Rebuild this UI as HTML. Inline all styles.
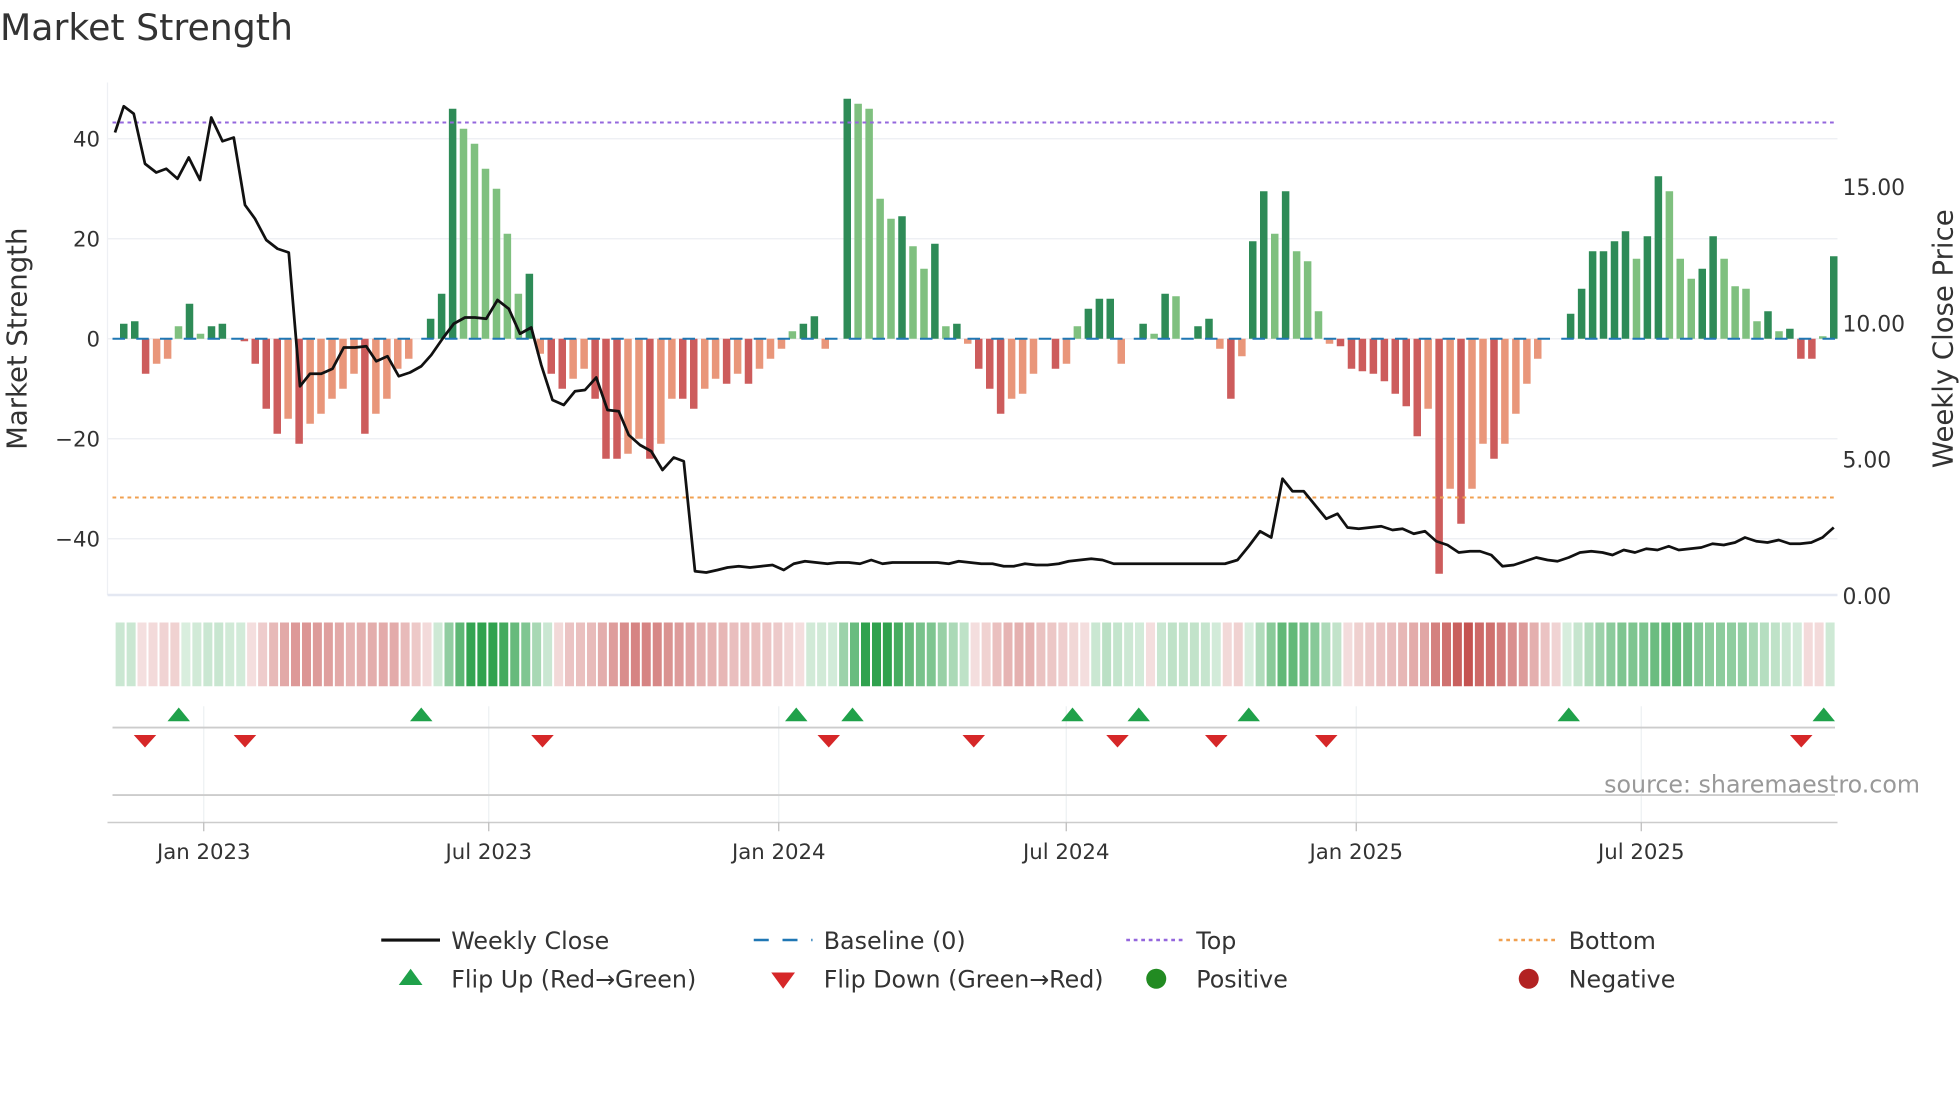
<!DOCTYPE html>
<html><head><meta charset="utf-8">
<style>
html,body{margin:0;padding:0;background:#fff;width:1960px;height:1102px;overflow:hidden}
svg{display:block}
text{font-family:"DejaVu Sans","Liberation Sans",sans-serif;fill:#333}
</style></head>
<body>
<svg id="s" width="1960" height="1102" viewBox="0 0 1568 881.6" xmlns="http://www.w3.org/2000/svg">
<text x="0" y="32" font-size="29" fill="#333">Market Strength</text>
<g stroke="#eceef2" stroke-width="1">
<line x1="86" x2="1470" y1="111" y2="111"/><line x1="86" x2="1470" y1="191" y2="191"/>
<line x1="86" x2="1470" y1="351" y2="351"/><line x1="86" x2="1470" y1="431" y2="431"/>
<line x1="86" x2="1470" y1="271" y2="271"/>
</g>
<line x1="86" x2="86" y1="66" y2="476" stroke="#eef0f4"/>
<line x1="86" x2="1470" y1="476" y2="476" stroke="#e4e8f2" stroke-width="2"/>
<g id="bars"></g>
<line x1="90" x2="1470" y1="271" y2="271" stroke="#1f77b4" stroke-width="1.6" stroke-dasharray="10,9"/>
<line x1="90" x2="1470" y1="98" y2="98" stroke="#9467dd" stroke-width="1.6" stroke-dasharray="3,3"/>
<line x1="90" x2="1470" y1="398" y2="398" stroke="#f0a050" stroke-width="1.6" stroke-dasharray="3,3"/>
<polyline id="price" fill="none" stroke="#111" stroke-width="2.2" stroke-linejoin="round"/>
<g font-size="17" text-anchor="end">
<text x="80" y="117">40</text><text x="80" y="197">20</text><text x="80" y="277">0</text>
<text x="80" y="357">−20</text><text x="80" y="437">−40</text>
</g>
<g font-size="17.5">
<text x="1474" y="156">15.00</text><text x="1474" y="265">10.00</text>
<text x="1474" y="374">5.00</text><text x="1474" y="483">0.00</text>
</g>
<text transform="translate(21,271) rotate(-90)" font-size="22" text-anchor="middle">Market Strength</text>
<text transform="translate(1562,271) rotate(-90)" font-size="22" text-anchor="middle">Weekly Close Price</text>
<g id="strip"></g>
<g stroke="#edf0f3"><line x1="163" x2="163" y1="565" y2="658"/><line x1="391" x2="391" y1="565" y2="658"/><line x1="623" x2="623" y1="565" y2="658"/><line x1="853" x2="853" y1="565" y2="658"/><line x1="1085" x2="1085" y1="565" y2="658"/><line x1="1313" x2="1313" y1="565" y2="658"/></g>
<line x1="90" x2="1468" y1="582" y2="582" stroke="#ccc" stroke-width="1.5"/>
<line x1="90" x2="1468" y1="636" y2="636" stroke="#ccc" stroke-width="1.5"/>
<line x1="86" x2="1470" y1="658" y2="658" stroke="#ccc" stroke-width="1.2"/>
<g id="flips"></g>
<g stroke="#bbb"><line x1="163" x2="163" y1="658" y2="665"/><line x1="391" x2="391" y1="658" y2="665"/><line x1="623" x2="623" y1="658" y2="665"/><line x1="853" x2="853" y1="658" y2="665"/><line x1="1085" x2="1085" y1="658" y2="665"/><line x1="1313" x2="1313" y1="658" y2="665"/></g>
<g font-size="17" text-anchor="middle">
<text x="163" y="687">Jan 2023</text><text x="391" y="687">Jul 2023</text><text x="623" y="687">Jan 2024</text>
<text x="853" y="687">Jul 2024</text><text x="1085" y="687">Jan 2025</text><text x="1313" y="687">Jul 2025</text>
</g>
<text x="1536" y="634" font-size="19" text-anchor="end" style="fill:#999">source: sharemaestro.com</text>
<g font-size="19">
<line x1="305" x2="352" y1="752" y2="752" stroke="#111" stroke-width="2.5"/><text x="361" y="759">Weekly Close</text>
<line x1="603" x2="650" y1="752" y2="752" stroke="#1f77b4" stroke-width="2" stroke-dasharray="12,11"/><text x="659" y="759">Baseline (0)</text>
<line x1="901" x2="948" y1="752" y2="752" stroke="#9467dd" stroke-width="2" stroke-dasharray="3,3"/><text x="957" y="759">Top</text>
<line x1="1199" x2="1246" y1="752" y2="752" stroke="#f0a050" stroke-width="2" stroke-dasharray="3,3"/><text x="1255" y="759">Bottom</text>
<polygon points="319,788 338,788 328.5,775" fill="#1fa14a"/><text x="361" y="790">Flip Up (Red→Green)</text>
<polygon points="617,778 636,778 626.5,791" fill="#d62728"/><text x="659" y="790">Flip Down (Green→Red)</text>
<circle cx="925" cy="783" r="8" fill="#228b22"/><text x="957" y="790">Positive</text>
<circle cx="1223" cy="783" r="8" fill="#b22222"/><text x="1255" y="790">Negative</text>
</g>
</svg>
<script>
var v=[3,3.5,-7,-5,-4,2.5,7,1,2.5,3,0,-0.5,-5,-14,-19,-16,-21,-17,-15,-12,-10,-7,-19,-15,-12,-6,-4,0,4,9,46,42,39,34,30,21,9,13,-3,-7,-10,-8,-6,-12,-24,-24,-23,-20,-24,-21,-12,-12,-14,-10,-8,-9,-7,-9,-6,-4,-2,1.5,3,4.5,-2,0,48,47,46,28,24,24.5,18.5,14,19,2.5,3,-1,-6,-10,-15,-12,-11,-7,0,-6,-5,2.5,6,8,8,-5,0,3,1,9,8.5,0,2.5,4,-2,-12,-3.5,19.5,29.5,21,29.5,17.5,15.5,5.5,-1,-1.5,-6,-6.5,-7,-8.5,-11,-13.5,-19.5,-14,-47,-30,-37,-30,-21,-24,-21,-15,-9,-4,0,0,5,10,17.5,17.5,19.5,21.5,16,20.5,32.5,29.5,16,12,14,20.5,16,10.5,10,3.5,5.5,1.5,2,-4,-4,0.5,16.5];
var n=v.length,x0=99,st=(1467-x0)/(n-1),b='',s='';
for(var i=0;i<n;i++){var x=x0+i*st,a=v[i],p=i?v[i-1]:0,dark=Math.abs(a)>=Math.abs(p);
if(a!=0){var c=a>0?(dark?'#2e8b57':'#7fc07f'):(dark?'#cd5c5c':'#e9967a');
b+='<rect x="'+(x-3).toFixed(1)+'" y="'+(a>0?271-a*4:271)+'" width="6" height="'+Math.abs(a*4)+'" fill="'+c+'"/>';}
var m=0,k=0;for(var j=Math.max(0,i-3);j<=i;j++){m+=v[j];k++;}m/=k;
var t=Math.min(1,Math.abs(m)/35)*0.8+0.18;
var col=m>=0?'rgba(44,160,74,'+t.toFixed(2)+')':'rgba(196,80,78,'+t.toFixed(2)+')';
s+='<rect x="'+(x-6.5).toFixed(1)+'" y="498" width="'+(st-1.6).toFixed(1)+'" height="51" fill="'+col+'"/>';}
document.getElementById('bars').innerHTML=b;document.getElementById('strip').innerHTML=s;
var up=[143,337,637,682,858,911,999,1255,1459],dn=[116,196,434,663,779,894,973,1061,1441],f='';
up.forEach(function(x){f+='<polygon points="'+(x-9)+',577 '+(x+9)+',577 '+x+',566" fill="#1fa14a"/>'});
dn.forEach(function(x){f+='<polygon points="'+(x-9)+',588 '+(x+9)+',588 '+x+',598" fill="#d62728"/>'});
document.getElementById('flips').innerHTML=f;
document.getElementById('price').setAttribute('points',"92,106 99,85 107,91 116,131 125,138 133,135 142,143 151,126 160,144 169,94 178,113 187,110 196,164 204,175 213,192 222,199 231,202 240,309 248,299 257,299 266,295 275,278 284,278 293,277 301,289 310,285 319,301 328,298 337,293 345,284 354,271 363,259 372,254 380,254 389,255 398,240 407,247 416,267 425,262 433,292 442,320 451,324 460,313 468,312 477,302 486,328 495,329 503,348 512,356 521,361 530,376 539,366 547,369 556,457 565,458 574,456 582,454 591,453 600,454 609,453 618,452 627,456 635,451 644,449 653,450 662,451 670,450 679,450 688,451 697,448 706,451 714,450 723,450 732,450 741,450 750,450 759,451 767,449 776,450 785,451 794,451 803,453 811,453 820,451 829,452 838,452 847,451 855,449 864,448 873,447 882,448 891,451 980,451 990,448 999,437 1008,425 1017,430 1026,383 1034,393 1043,393 1052,404 1061,415 1070,411 1078,422 1087,423 1096,422 1105,421 1114,424 1122,423 1131,427 1140,425 1149,433 1158,436 1167,442 1176,441 1184,441 1193,444 1202,453 1211,452 1220,449 1229,446 1238,448 1246,449 1255,446 1264,442 1273,441 1282,442 1290,444 1299,440 1308,442 1317,439 1326,440 1335,437 1343,440 1352,439 1361,438 1370,435 1379,436 1388,434 1396,430 1405,433 1414,434 1423,432 1432,435 1440,435 1449,434 1458,430 1467,422");
</script>
</body></html>
